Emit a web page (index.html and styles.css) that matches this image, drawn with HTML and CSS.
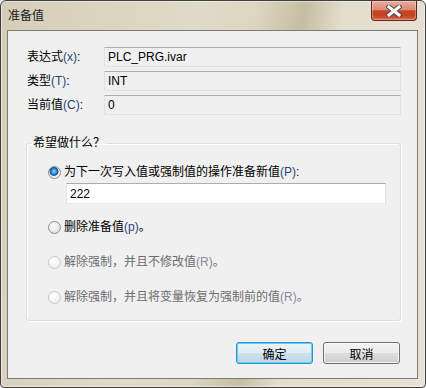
FILE: index.html
```html
<!DOCTYPE html>
<html lang="zh-CN">
<head>
  <meta charset="UTF-8">
  <title>准备值</title>
  <link rel="stylesheet" href="styles.css">
</head>
<body>
  <div class="window">
    <div class="titlebar">
      <span class="title">准备值</span>
      <button class="close" aria-label="关闭">
        <svg width="16" height="12" viewBox="0 0 16 12">
          <path d="M3 2 L13 10 M13 2 L3 10" stroke="#4b4b4b" stroke-width="5" stroke-linecap="square"/>
          <path d="M3 2 L13 10 M13 2 L3 10" stroke="#fff" stroke-width="3" stroke-linecap="square"/>
        </svg>
      </button>
    </div>

    <div class="client">
      <!-- Read-only info -->
      <div class="fields">
        <span class="field-label">表达式<span class="key">(x)</span>:</span>
        <div class="readonly">PLC_PRG.ivar</div>
        <span class="field-label">类型<span class="key">(T)</span>:</span>
        <div class="readonly">INT</div>
        <span class="field-label">当前值<span class="key">(C)</span>:</span>
        <div class="readonly">0</div>
      </div>

      <fieldset class="group">
        <legend>希望做什么？</legend>
        <div class="options">
          <label class="option">
            <input type="radio" name="action" checked>
            <span>为下一次写入值或强制值的操作准备新值<span class="key">(P)</span>:</span>
          </label>
          <input class="value" type="text" value="222">

          <label class="option spaced">
            <input type="radio" name="action">
            <span>删除准备值<span class="key">(p)</span>。</span>
          </label>

          <label class="option spaced disabled">
            <input type="radio" name="action" disabled>
            <span>解除强制，并且不修改值<span class="key">(R)</span>。</span>
          </label>

          <label class="option spaced disabled">
            <input type="radio" name="action" disabled>
            <span>解除强制，并且将变量恢复为强制前的值<span class="key">(R)</span>。</span>
          </label>
        </div>
      </fieldset>

      <div class="buttons">
        <button class="btn default">确定</button>
        <button class="btn">取消</button>
      </div>
    </div>
  </div>
</body>
</html>
```

FILE: styles.css
```css
body {
  margin: 0;
  font-family: "Liberation Sans", "Noto Sans CJK SC", sans-serif;
  font-size: 12px;
  color: #000;
  background: #fff;
}
.window {
  width: 426px;
  height: 388px;
  box-sizing: border-box;
  border: 1px solid #3f3f3f;
  border-radius: 6px 6px 4px 4px;
  display: flex;
  flex-direction: column;
  background: linear-gradient(100deg, #d5cdb8 0%, #e0dac8 40%, #ddd6c3 52%, #c6bda2 62%, #e3ddce 70%, #e7e2d5 100%);
  box-shadow: inset 0 0 0 1px rgba(255,255,255,0.45);
  overflow: hidden;
}
.titlebar {
  height: 29px;
  display: flex;
  align-items: flex-start;
  justify-content: space-between;
}
.title {
  margin: 7px 0 0 7px;
  line-height: 16px;
  color: #1a1a1a;
}
.close {
  width: 46px;
  height: 20px;
  margin-right: 8px;
  padding: 0;
  border: 1px solid #6a2619;
  border-top: none;
  border-radius: 0 0 4px 4px;
  background: linear-gradient(#e9ab9c 0%, #dd8a76 45%, #c64526 52%, #c3421f 75%, #d66a4c 100%);
  box-shadow: inset 0 0 0 1px rgba(255,255,255,0.3);
  display: flex;
  align-items: center;
  justify-content: center;
}
.client {
  flex: 1;
  margin: 0 7px 8px 6px;
  border: 1px solid #7d7b76;
  background: #f0f0f0;
  padding: 16px 16px 0 18px;
  display: flex;
  flex-direction: column;
}
.fields {
  display: grid;
  grid-template-columns: 77px 1fr;
  row-gap: 4px;
  padding-left: 1px;
}
.field-label {
  line-height: 20px;
}
.key {
  color: #2b4478;
}
.disabled .key {
  color: #8a8aa0;
}
.readonly {
  height: 20px;
  box-sizing: border-box;
  border: 1px solid #dfe2e6;
  border-top-color: #acaeb2;
  border-radius: 1px;
  padding: 0 3px;
  line-height: 18px;
  background: #f0f0f0;
}
.group {
  margin: 20px 0 0 0;
  padding: 0 0 15px 0;
  border: 1px solid #d5dfe5;
  border-radius: 3px;
  box-shadow: inset 1px 1px 0 #fff, 1px 1px 0 #fff;
}
.group legend {
  margin-left: 4px;
  padding: 0 2px;
  line-height: 16px;
}
.options {
  padding: 13px 14px 0 21px;
  display: flex;
  flex-direction: column;
  align-items: flex-start;
}
.option {
  display: flex;
  align-items: center;
  gap: 3px;
  line-height: 16px;
}
.option.spaced {
  margin-top: 19px;
}
.option:nth-child(3) {
  margin-top: 15px;
}
.option.disabled {
  color: #6d6d6d;
}
.option input {
  appearance: none;
  width: 13px;
  height: 13px;
  margin: 0;
  border: 1px solid #8e8f8f;
  border-radius: 50%;
  background: radial-gradient(circle at 40% 35%, #ffffff 0%, #e9e9e9 55%, #cfcfcf 100%);
}
.option input:checked {
  background: radial-gradient(circle at 45% 40%, #9fd4f5 0%, #2c8ad3 30%, #1b4f8c 45%, #f2f2f2 55%, #dadada 100%);
}
.option input:disabled {
  border-color: #c8c8c8;
  background: radial-gradient(circle at 40% 35%, #ffffff 0%, #f2f2f2 60%, #e3e3e3 100%);
}
.value {
  width: 320px;
  height: 21px;
  box-sizing: border-box;
  margin: 3px 0 0 18px;
  padding: 0 3px;
  border: 1px solid #e3e9ef;
  border-top-color: #abadb3;
  border-left-color: #e2e3ea;
  border-right-color: #dbdfe6;
  background: #fff;
  font: inherit;
  color: #000;
  outline: none;
}
.buttons {
  margin-top: 21px;
  display: flex;
  justify-content: flex-end;
  gap: 10px;
  padding-right: 1px;
}
.btn {
  width: 77px;
  height: 22px;
  padding: 0;
  border: 1px solid #707070;
  border-radius: 3px;
  background: linear-gradient(#f2f2f2 0%, #ebebeb 50%, #dddddd 51%, #cfcfcf 100%);
  box-shadow: inset 0 0 0 1px rgba(255,255,255,0.7);
  font: inherit;
  color: #000;
}
.btn.default {
  border-color: #2f8fd0;
  background: linear-gradient(#eaf3f8 0%, #dfecf3 50%, #cfe1ec 51%, #c0d6e3 100%);
  box-shadow: inset 0 0 0 1px #63d1f5;
}
```
